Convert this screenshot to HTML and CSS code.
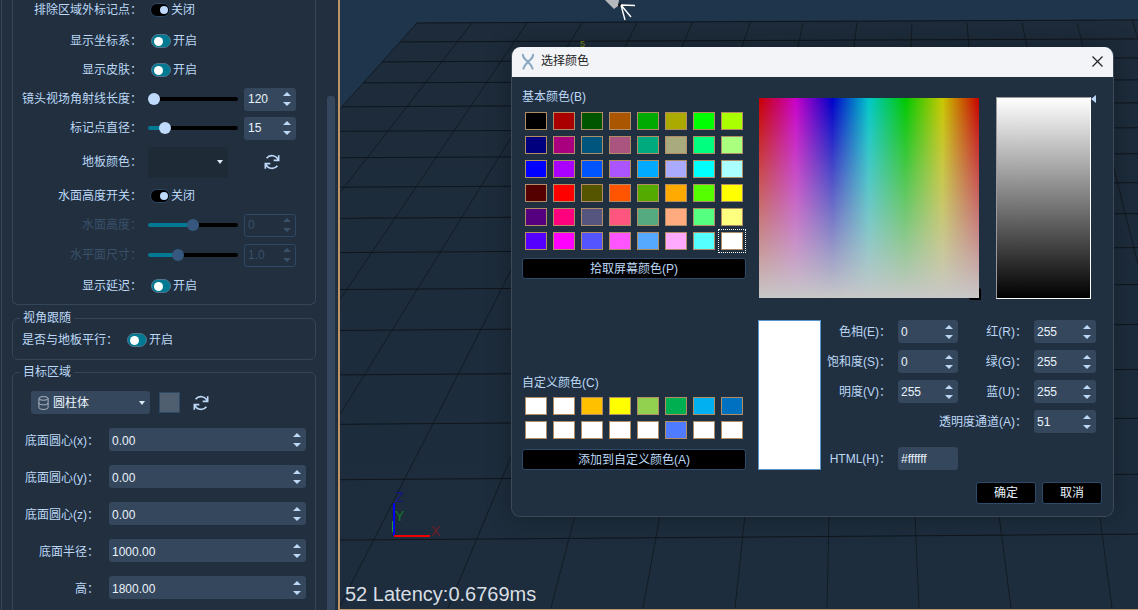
FILE: index.html
```html
<!DOCTYPE html>
<html lang="zh-CN">
<head>
<meta charset="utf-8">
<title>选择颜色</title>
<link rel="stylesheet" href="styles.css">
</head>
<body>
<div class="app">
  <aside class="panel">
    <div class="panel-content">
      <section class="group group-first">
        <div class="row row-a"><label class="lab">排除区域外标记点：</label><span class="toggle off"></span><span class="state">关闭</span></div>
        <div class="row row-b"><label class="lab">显示坐标系：</label><span class="toggle on"></span><span class="state">开启</span></div>
        <div class="row"><label class="lab">显示皮肤：</label><span class="toggle on"></span><span class="state">开启</span></div>
        <div class="row"><label class="lab">镜头视场角射线长度：</label><span class="slider" style="--v:6px"><i></i></span><span class="spin small"><b>120</b><em><u></u><s></s></em></span></div>
        <div class="row"><label class="lab">标记点直径：</label><span class="slider" style="--v:17px"><i></i></span><span class="spin small"><b>15</b><em><u></u><s></s></em></span></div>
        <div class="row row-tall"><label class="lab">地板颜色：</label><span class="combo dark"><span class="caret"></span></span>
          <svg class="refresh floor-refresh" viewBox="0 0 24 24"><path d="M20 4v6h-6M4 20v-6h6M19.5 10A8 8 0 0 0 5.5 7.5M4.5 14a8 8 0 0 0 14 2.5"/></svg></div>
        <div class="row"><label class="lab">水面高度开关：</label><span class="toggle off"></span><span class="state">关闭</span></div>
        <div class="row disabled"><label class="lab">水面高度：</label><span class="slider" style="--v:45px"><i></i></span><span class="spin small"><b>0</b><em><u></u><s></s></em></span></div>
        <div class="row row-b disabled"><label class="lab">水平面尺寸：</label><span class="slider" style="--v:30px"><i></i></span><span class="spin small"><b>1.0</b><em><u></u><s></s></em></span></div>
        <div class="row row-c"><label class="lab">显示延迟：</label><span class="toggle on"></span><span class="state">开启</span></div>
      </section>
      <fieldset class="group group-view">
        <legend>视角跟随</legend>
        <div class="parallel"><label>是否与地板平行：</label><span class="toggle on"></span><span class="state">开启</span></div>
      </fieldset>
      <fieldset class="group group-target">
        <legend>目标区域</legend>
        <div class="shape-row">
          <span class="combo shape">
            <svg class="cyl" viewBox="0 0 12 16"><ellipse cx="6" cy="3" rx="5" ry="2"/><path d="M1 3v10c0 1 2 2 5 2s5-1 5-2V3M1 8c0 1 2 2 5 2s5-1 5-2"/></svg>
            <span class="shape-name">圆柱体</span><span class="caret"></span>
          </span>
          <span class="chip"></span>
          <svg class="refresh" viewBox="0 0 24 24"><path d="M20 4v6h-6M4 20v-6h6M19.5 10A8 8 0 0 0 5.5 7.5M4.5 14a8 8 0 0 0 14 2.5"/></svg>
        </div>
        <div class="field"><label>底面圆心(x)：</label><span class="spin wide"><b>0.00</b><em><u></u><s></s></em></span></div>
        <div class="field"><label>底面圆心(y)：</label><span class="spin wide"><b>0.00</b><em><u></u><s></s></em></span></div>
        <div class="field"><label>底面圆心(z)：</label><span class="spin wide"><b>0.00</b><em><u></u><s></s></em></span></div>
        <div class="field"><label>底面半径：</label><span class="spin wide"><b>1000.00</b><em><u></u><s></s></em></span></div>
        <div class="field"><label>高：</label><span class="spin wide"><b>1800.00</b><em><u></u><s></s></em></span></div>
      </fieldset>
    </div>
    <div class="scrollbar"></div>
  </aside>

  <main class="scene">
    <svg class="world" viewBox="340 0 798 610" preserveAspectRatio="none">
      <defs>
        <linearGradient id="floor" x1="0" y1="0" x2="0" y2="1"><stop offset="0" stop-color="#1d2b3a"/><stop offset="1" stop-color="#1d2d3d"/></linearGradient>
      </defs>
      <polygon points="417,23 1138,20 1138,610 340,610 340,109" fill="url(#floor)"/>
      <g class="grid-h">
        <line x1="417" y1="23" x2="1138" y2="20"/>
        <line x1="400" y1="42" x2="1138" y2="39"/>
        <line x1="382" y1="62" x2="1138" y2="58"/>
        <line x1="363" y1="83" x2="1138" y2="80"/>
        <line x1="342" y1="107" x2="1138" y2="103"/>
        <line x1="340" y1="131.5" x2="1138" y2="128"/>
        <line x1="340" y1="158" x2="1138" y2="154"/>
        <line x1="340" y1="187.5" x2="1138" y2="183"/>
        <line x1="340" y1="218.7" x2="1138" y2="214"/>
        <line x1="340" y1="253" x2="1138" y2="248"/>
        <line x1="340" y1="290" x2="1138" y2="285"/>
        <line x1="340" y1="331" x2="1138" y2="325"/>
        <line x1="340" y1="375.5" x2="1138" y2="370"/>
        <line x1="340" y1="425" x2="1138" y2="419"/>
        <line x1="340" y1="480.5" x2="1138" y2="475"/>
        <line x1="340" y1="541" x2="1138" y2="535"/>
      </g>
      <g class="grid-v">
        <polyline points="417,23 340,109"/>
        <polyline points="472,23 340,193"/>
        <polyline points="527,23 340,300"/>
        <polyline points="582,23 340,415"/>
        <polyline points="637,23 340,607"/>
        <polyline points="692,23 448,609"/>
        <polyline points="750,23 742,47 575,516 551,609"/>
        <polyline points="803,23 798,47 660,516 643,609"/>
        <polyline points="857,23 854,47 745,516 735,609"/>
        <polyline points="912,23 911,47 829,516 827,609"/>
        <polyline points="967,23 969,47 915,516 919,609"/>
        <polyline points="1022,23 1027,47 999,516 1011,609"/>
        <polyline points="1077,23 1113,165 1138,265"/>
        <polyline points="1132,20 1138,39"/>
        <polyline points="1100,519 1112,609"/>
      </g>
      <polygon class="cam" points="605,0 619,0 618,6 614,9"/>
      <circle cx="620" cy="5" r="2" fill="#15191d"/>
      <g class="cam-rays"><path d="M621 5L635 5.500M621 5L625 20M621 5L631 17"/></g>
      <text class="tick" x="580" y="47">5</text>
      <path class="ax-g" d="M392.500 522V533"/>
      <path class="ax-b" d="M394 504V537"/>
      <path class="ax-r" d="M394 537H430"/>
      <text class="al al-z" x="395" y="503">Z</text>
      <text class="al al-y" x="395" y="522">Y</text>
      <text class="al al-x" x="431" y="537">X</text>
    </svg>
    <div class="latency">52 Latency:0.6769ms</div>
  </main>

  <div class="dialog">
    <header class="dlg-title">
      <svg class="dlg-logo" viewBox="0 0 14 17"><path d="M2 1C1 4 4 6 7 9s5 5 4.500 7.500M12 1C13 4 10 6 7 9s-5 5-4.500 7.500"/></svg>
      <span class="dlg-name">选择颜色</span>
      <svg class="dlg-close" viewBox="0 0 11 11"><path d="M.5.5l10 10M10.500.5l-10 10"/></svg>
    </header>
    <div class="dlg-body">
      <div class="col-left">
        <div class="cap">基本颜色(B)</div>
        <div class="swatches basic">
          <i style="background:#000000"></i><i style="background:#aa0000"></i><i style="background:#005500"></i><i style="background:#aa5500"></i><i style="background:#00aa00"></i><i style="background:#aaaa00"></i><i style="background:#00ff00"></i><i style="background:#aaff00"></i>
          <i style="background:#00007f"></i><i style="background:#aa007f"></i><i style="background:#00557f"></i><i style="background:#aa557f"></i><i style="background:#00aa7f"></i><i style="background:#aaaa7f"></i><i style="background:#00ff7f"></i><i style="background:#aaff7f"></i>
          <i style="background:#0000ff"></i><i style="background:#aa00ff"></i><i style="background:#0055ff"></i><i style="background:#aa55ff"></i><i style="background:#00aaff"></i><i style="background:#aaaaff"></i><i style="background:#00ffff"></i><i style="background:#aaffff"></i>
          <i style="background:#550000"></i><i style="background:#ff0000"></i><i style="background:#555500"></i><i style="background:#ff5500"></i><i style="background:#55aa00"></i><i style="background:#ffaa00"></i><i style="background:#55ff00"></i><i style="background:#ffff00"></i>
          <i style="background:#55007f"></i><i style="background:#ff007f"></i><i style="background:#55557f"></i><i style="background:#ff557f"></i><i style="background:#55aa7f"></i><i style="background:#ffaa7f"></i><i style="background:#55ff7f"></i><i style="background:#ffff7f"></i>
          <i style="background:#5500ff"></i><i style="background:#ff00ff"></i><i style="background:#5555ff"></i><i style="background:#ff55ff"></i><i style="background:#55aaff"></i><i style="background:#ffaaff"></i><i style="background:#55ffff"></i><i class="selected" style="background:#ffffff"></i>
        </div>
        <button class="wide-btn pick">拾取屏幕颜色(P)</button>
        <div class="cap cap-custom">自定义颜色(C)</div>
        <div class="swatches custom">
          <i style="background:#ffffff"></i><i style="background:#ffffff"></i><i style="background:#ffc000"></i><i style="background:#ffff00"></i><i style="background:#92d050"></i><i style="background:#00b050"></i><i style="background:#00b0f0"></i><i style="background:#0070c0"></i>
          <i style="background:#ffffff"></i><i style="background:#ffffff"></i><i style="background:#ffffff"></i><i style="background:#ffffff"></i><i style="background:#ffffff"></i><i style="background:#4f7cff"></i><i style="background:#ffffff"></i><i style="background:#ffffff"></i>
        </div>
        <button class="wide-btn add">添加到自定义颜色(A)</button>
      </div>
      <div class="col-right">
        <div class="picker">
          <div class="spectrum"><span class="cross"></span></div>
          <div class="lum"><span class="lum-arrow"></span></div>
        </div>
        <div class="values">
          <div class="preview"></div>
          <div class="form">
            <label>色相(E)：</label><span class="spin hsv"><b>0</b><em><u></u><s></s></em></span>
            <label>红(R)：</label><span class="spin rgb"><b>255</b><em><u></u><s></s></em></span>
            <label>饱和度(S)：</label><span class="spin hsv"><b>0</b><em><u></u><s></s></em></span>
            <label>绿(G)：</label><span class="spin rgb"><b>255</b><em><u></u><s></s></em></span>
            <label>明度(V)：</label><span class="spin hsv"><b>255</b><em><u></u><s></s></em></span>
            <label>蓝(U)：</label><span class="spin rgb"><b>255</b><em><u></u><s></s></em></span>
            <label class="alpha">透明度通道(A)：</label><span class="spin rgb"><b>51</b><em><u></u><s></s></em></span>
            <label class="html-label">HTML(H)：</label><span class="spin hsv html-input"><b>#ffffff</b></span>
          </div>
        </div>
        <div class="actions"><button>确定</button><button>取消</button></div>
      </div>
    </div>
  </div>
</div>
</body>
</html>
```
FILE: styles.css
```css
* { box-sizing: border-box; }
html, body { margin: 0; height: 100%; overflow: hidden; }
body {
  font: 12px/16px "Liberation Sans", "Noto Sans CJK SC", sans-serif;
  color: #bcd8f6;
  background: #212f3f;
}
.app { position: relative; display: flex; width: 1138px; height: 610px; overflow: hidden; }

/* left panel */
.panel {
  flex: 0 0 340px;
  display: flex;
  height: 610px;
  background: #212f3f;
  border-right: 2px solid #bd9468;
  overflow: hidden;
}
.panel-content {
  flex: 0 0 327px;
  padding: 0 11px 0 12px;
  box-shadow: inset 1px 0 0 #212f3f, inset 2px 0 0 #36465a;
}
.scrollbar { flex: 0 0 8px; margin-top: 96px; background: #35475c; border-radius: 3px 3px 0 0; }

.group { margin: 0; border: 1px solid #34465a; border-radius: 6px; padding: 0; min-width: 0; }
.group legend { margin-left: 7px; padding: 0 3px; line-height: 16px; color: #bcd8f6; }
.group-first {
  height: 305px;
  border-top: 0;
  border-radius: 0 0 6px 6px;
  display: flex;
  flex-direction: column;
  gap: 5px;
}
.row { display: flex; align-items: center; height: 24px; flex: none; }
.row-a { height: 20px; margin-bottom: 3px; }
.row-b { margin-top: 1px; }
.row-c { margin-top: 2px; }
.row-tall { height: 34px; }
.lab { width: 129px; text-align: right; white-space: nowrap; flex: none; margin-right: 6px; }
.disabled .lab { color: #3a5068; }

.toggle {
  position: relative;
  flex: none;
  width: 20px;
  height: 14px;
  margin-left: 2px;
  border-radius: 7px;
  border: 1px solid #2c4764;
  background: #000;
}
.toggle::after {
  content: "";
  position: absolute;
  top: 2px;
  right: 1px;
  width: 8px;
  height: 8px;
  border-radius: 50%;
  background: #bfd9fb;
}
.toggle.on { background: #007a92; border-color: #54748c; margin-left: 3px; }
.toggle.on::after { left: 2px; right: auto; width: 9px; height: 9px; top: 1.500px; background: #fff; }
.state { margin-left: 1px; }
.toggle.on + .state { margin-left: 2px; }

.slider {
  position: relative;
  flex: none;
  width: 90px;
  height: 4px;
  border-radius: 2px;
  background: linear-gradient(to right, #007a92 var(--v), #000 var(--v));
}
.slider i {
  position: absolute;
  top: -4px;
  left: var(--v);
  width: 12px;
  height: 12px;
  margin-left: -6px;
  border-radius: 50%;
  background: #bfdafb;
}
.disabled .slider i { background: #36587e; }

.spin {
  display: flex;
  align-items: center;
  justify-content: space-between;
  flex: none;
  height: 23px;
  padding: 0 5px 0 3px;
  border-radius: 3px;
  background: #35475c;
  color: #e9f2fb;
}
.spin b { font-weight: 400; }
.spin em { display: flex; flex-direction: column; gap: 6px; }
.spin u, .spin s { display: block; width: 0; height: 0; border-left: 4px solid transparent; border-right: 4px solid transparent; }
.spin u { border-bottom: 4px solid #bcd8f6; }
.spin s { border-top: 4px solid #bcd8f6; }
.small { width: 52px; margin-left: 6px; padding-left: 4px; padding-right: 5px; }
.disabled .spin { background: transparent; border: 1px solid #2d4966; color: #3a5068; padding-left: 3px; padding-right: 4px; }
.disabled .spin u { border-bottom-color: #3a5068; }
.disabled .spin s { border-top-color: #3a5068; }

.combo { display: flex; align-items: center; flex: none; border-radius: 3px; }
.combo.dark { width: 80px; height: 31px; justify-content: flex-end; padding-right: 5px; background: #1e2a36; }
.caret { display: block; width: 0; height: 0; border-left: 3.500px solid transparent; border-right: 3.500px solid transparent; border-top: 4px solid #dbe9f8; }
.refresh { flex: none; width: 20px; height: 20px; fill: none; stroke: #bcd8f6; stroke-width: 2; }
.floor-refresh { margin-left: 34px; }

.group-view { height: 50px; margin-top: 5px; }
.parallel { display: flex; align-items: center; height: 24px; margin: 2px 0 0 9px; }
.parallel label { width: 102px; white-space: nowrap; }
.group-target { margin-top: 4px; height: 260px; }
.shape-row { display: flex; align-items: center; gap: 9px; margin: 11px 0 0 18px; height: 23px; }
.combo.shape { width: 119px; height: 23px; padding: 0 5px 0 7px; background: #35475c; color: #e9f2fb; }
.cyl { width: 11px; height: 16px; fill: none; stroke: #b7c3cf; stroke-width: 1; }
.shape-name { flex: 1; margin-left: 4px; }
.chip { flex: none; width: 21px; height: 21px; background: #505f70; border: 1px solid #2d4966; }
.shape-row .refresh { margin-left: 2px; }
.field { display: flex; align-items: center; height: 23px; margin-top: 14px; }
.field label { width: 86px; padding-top: 2px; text-align: right; white-space: nowrap; margin-right: 10px; }
.wide { width: 197px; padding: 0 5px 0 3px; }
.wide b { padding-top: 2px; }

/* 3D scene */
.scene { position: relative; flex: 1; background: #1f354b; border-bottom: 1px solid #bd9468; }
.world { position: absolute; inset: 0; width: 100%; height: 100%; }
.grid-h line { stroke: #0f151c; stroke-width: 1; }
.grid-v polyline { fill: none; stroke: #10161d; stroke-width: .8; }
.cam { fill: #b6b9bb; }
.cam-rays { fill: none; stroke: #fff; stroke-width: 1.400; }
.tick { font-size: 9px; fill: #7f8a10; }
.ax-r { stroke: #f00000; stroke-width: 2; }
.ax-b { stroke: #0000ee; stroke-width: 2; }
.ax-g { stroke: #1f9a30; stroke-width: 1; }
.al { font-size: 14px; }
.al-z { fill: #14148a; }
.al-y { fill: #14782c; }
.al-x { fill: #701c24; }
.latency { position: absolute; left: 5px; top: 583px; font-size: 20px; line-height: 23px; color: #d8dee4; white-space: nowrap; }

/* dialog */
.dialog {
  position: absolute;
  left: 511px;
  top: 47px;
  width: 603px;
  height: 470px;
  display: flex;
  flex-direction: column;
  border-radius: 9px;
  background: #213040;
  border: 1px solid #3b4959;
  border-top: 0;
  box-shadow: 0 0 26px rgba(0, 0, 0, .28);
  overflow: hidden;
}
.dlg-title { flex: 0 0 30px; display: flex; align-items: center; padding: 0 10px 2px 9px; background: #f2f4f8; color: #222; }
.dlg-logo { width: 14px; height: 17px; fill: none; stroke: #8ba6bf; stroke-width: 2; }
.dlg-name { flex: 1; margin-left: 6px; }
.dlg-close { width: 11px; height: 11px; fill: none; stroke: #222; stroke-width: 1.200; }
.dlg-body { flex: 1; display: flex; gap: 12px; padding: 11px 11px 0 10px; }
.col-left { flex: 0 0 224px; display: flex; flex-direction: column; }
.cap { height: 16px; flex: none; margin-top: 1px; }
.swatches { display: grid; grid-template-columns: repeat(8, 22px); grid-auto-rows: 18px; gap: 6px; margin-left: 3px; }
.swatches.basic { margin-top: 7px; }
.swatches.custom { margin-top: 6px; }
.swatches i { display: block; border: 1px solid #b08d64; }
.swatches i.selected { outline: 1px dotted #fff; outline-offset: 2px; }
.wide-btn { flex: none; display: block; width: 224px; height: 21px; padding: 0; border: 1px solid #2e4a6a; border-radius: 3px; background: #000; color: #bcd8f6; font: inherit; }
.pick { margin-top: 8px; }
.cap-custom { margin-top: 96px; }
.add { margin-top: 10px; }
.col-right { flex: 0 0 344px; display: flex; flex-direction: column; }
.picker { display: flex; align-items: flex-start; height: 203px; margin-left: 1px; gap: 17px; }
.spectrum {
  position: relative;
  width: 220px;
  height: 200px;
  margin-top: 10px;
  background:
    linear-gradient(to bottom, rgba(200, 200, 200, 0), #c8c8c8),
    linear-gradient(to right, #c80000, #c800c8, #0000c8, #00c8c8, #00c800, #c8c800, #c80000);
}
.cross { position: absolute; right: -1px; bottom: -1px; width: 11px; height: 11px; border-right: 1px solid #000; border-bottom: 1px solid #000; box-shadow: 1px 1px 0 #000; }
.lum {
  position: relative;
  width: 95px;
  height: 202px;
  margin-top: 9px;
  border: 1px solid #fff;
  border-top-color: #999;
  border-left-color: #999;
  background: linear-gradient(#fff, #000);
}
.lum-arrow { position: absolute; right: -6px; top: -3px; width: 0; height: 0; border-top: 4.500px solid transparent; border-bottom: 4.500px solid transparent; border-right: 5px solid #bcd8f6; }
.values { display: flex; margin-top: 29px; }
.preview { flex: none; width: 63px; height: 150px; background: #fff; border: 1px solid #5b95c9; }
.form { display: grid; grid-template-columns: 63px 14px 60px 62px 14px 62px; grid-auto-rows: 23px; gap: 7px 0; width: 281px; }
.form label { grid-column: span 2; text-align: right; white-space: nowrap; line-height: 25px; padding-right: 7px; }
.form .hsv { width: 60px; }
.form .rgb { width: 62px; }
.form .spin { padding-left: 3px; }
.form .spin b { padding-top: 1px; }
.form .alpha { grid-column: 1 / span 5; }
.form .html-label { grid-column: 1 / span 2; margin-top: 7px; }
.form .html-input { grid-column: 3; margin-top: 7px; }
.actions { display: flex; justify-content: flex-end; gap: 6px; margin-top: 12px; }
.actions button { width: 60px; height: 22px; padding: 0; border: 1px solid #2e4a6a; border-radius: 3px; background: #000; color: #e9f2fb; font: inherit; }
```
